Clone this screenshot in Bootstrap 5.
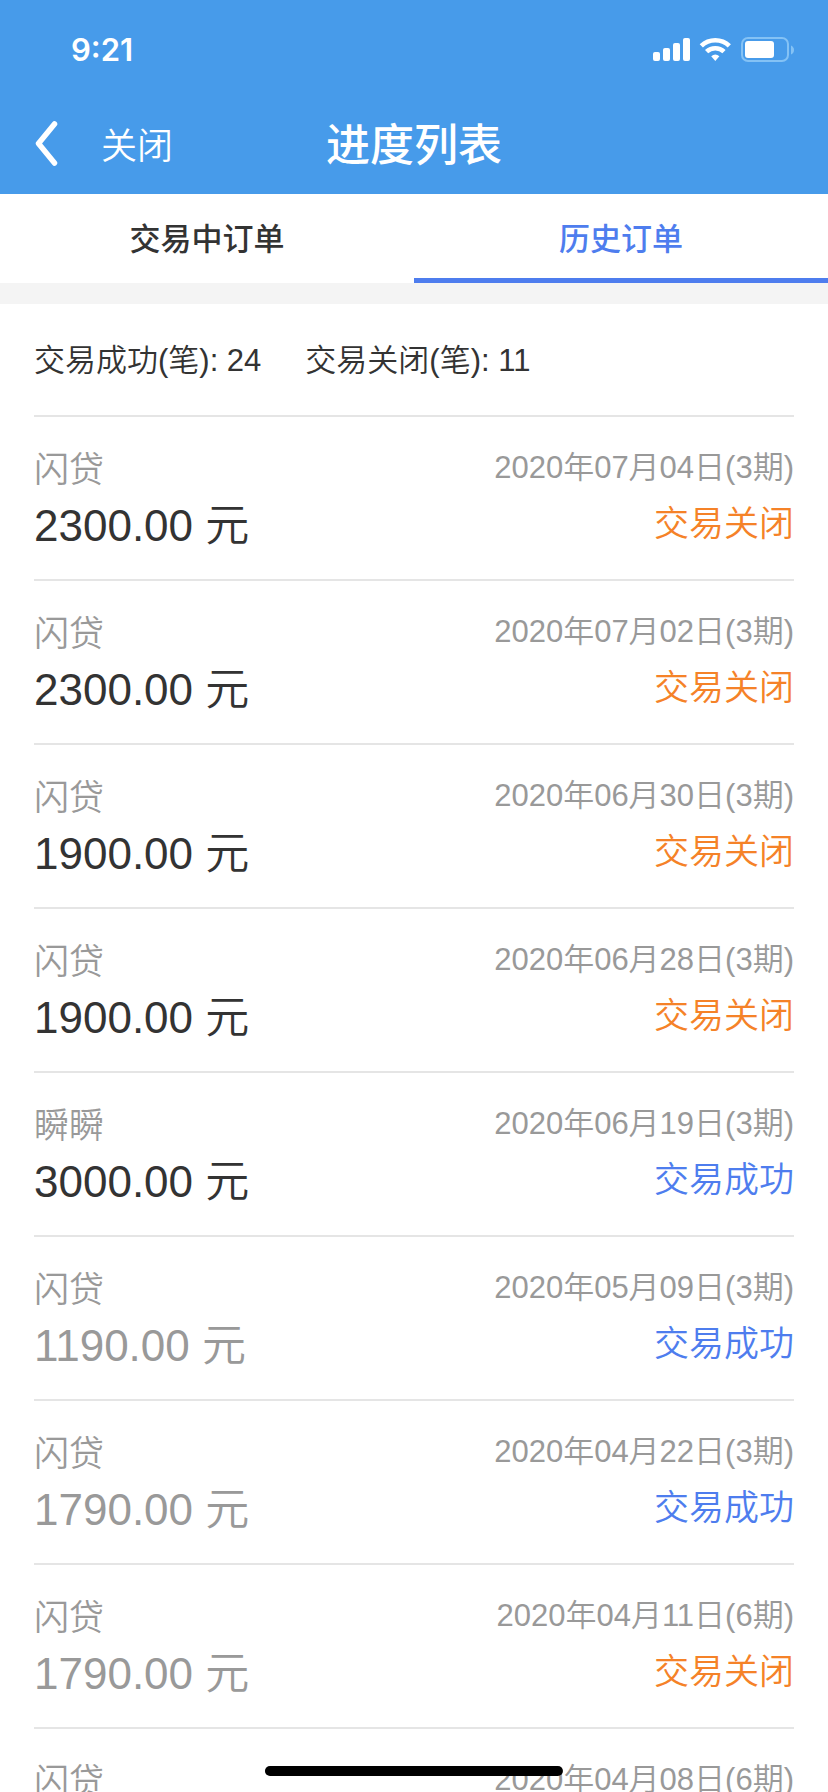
<!DOCTYPE html>
<html lang="zh-CN">
<head>
<meta charset="utf-8">
<meta name="viewport" content="width=device-width, initial-scale=1">
<title>进度列表</title>
<link href="https://cdn.jsdelivr.net/npm/bootstrap@5.3.0/dist/css/bootstrap.min.css" rel="stylesheet">
<style>
  body { font-family: "Liberation Sans", "Noto Sans CJK SC", sans-serif; color: #333; background: #fff; }
  .app-header { background: #479bea; color: #fff; }
  .status-bar { height: 92px; padding: 8px 33px 0 71px; }
  .clock { font: 600 31px/40px Inter, sans-serif; }
  .title-bar { height: 102px; }
  .title-bar h1 { font-size: 44px; line-height: 60px; font-weight: 500; padding-top: 6px; }
  .title-side { flex: 1 1 0; padding-left: 34px; }
  .back-btn { color: #fff; line-height: 1; }
  .close-btn { color: #fff; font-size: 36px; line-height: 44px; font-weight: 350; margin: 8px 0 0 43px; }
  .order-tabs { border-bottom: 21px solid #f4f4f4; }
  .order-tabs .nav-link { height: 89px; padding: 8px 0 0; font-size: 31px; line-height: 40px; font-weight: 500; color: #333; border-radius: 0; border-bottom: 5px solid transparent; }
  .order-tabs .nav-link.active { color: #4e7dee; border-bottom-color: #4e7dee; }
  .order-area { padding: 0 34px; overflow-y: auto; scrollbar-width: none; }
  .order-area::-webkit-scrollbar { display: none; }
  .totals { height: 113px; padding-top: 3px; gap: 44px; font-size: 31px; line-height: 44px; font-weight: 350; border-bottom: 2px solid #e5e5e5; }
  .order-row { height: 164px; padding: 29px 0 0; border-bottom: 2px solid #e5e5e5; font-weight: 350; }
  .order-name { font-size: 35px; line-height: 48px; color: #999; }
  .order-amount { font-size: 44px; line-height: 64px; }
  .order-date { font-size: 31px; line-height: 44px; color: #999; }
  .order-state { font-size: 35px; line-height: 68px; color: #f58228; }
  .order-state.done { color: #4e7dee; }
  .is-read { color: #999; }
  .home-bar { width: 36%; height: 10px; bottom: 16px; background: #000; }
</style>
</head>
<body>
<div class="vh-100 d-flex flex-column overflow-hidden">
  <header class="app-header flex-shrink-0">
    <div class="status-bar d-flex align-items-center justify-content-between">
      <span class="clock">9:21</span>
      <svg width="142" height="26" viewBox="0 0 142 26" fill="#fff" aria-hidden="true">
        <rect x="0" y="15" width="7" height="9" rx="2"/>
        <rect x="10" y="11" width="7" height="13" rx="2"/>
        <rect x="20" y="6" width="7" height="18" rx="2"/>
        <rect x="30" y="1" width="7" height="23" rx="2"/>
        <g fill="none" stroke="#fff" stroke-width="4.6">
          <path d="M48.300 8.900A20 20 0 0 1 76.300 8.900"/>
          <path d="M53.600 14.700A12.500 12.500 0 0 1 71 14.700"/>
        </g>
        <path d="M58.200 19.200Q62.300 16 66.400 19.200L62.300 24Z"/>
        <rect x="89" y="1" width="46" height="23" rx="6" fill="none" stroke="#84c2f5" stroke-width="2"/>
        <rect x="92" y="4" width="29" height="17" rx="3"/>
        <path d="M138 8.500q3 1.500 3 4.500t-3 4.500z" fill="#84c2f5"/>
      </svg>
    </div>
    <div class="title-bar d-flex align-items-center">
      <div class="title-side d-flex align-items-center">
        <button type="button" class="back-btn btn p-0 border-0" aria-label="返回">
          <svg width="24" height="48" viewBox="0 0 24 48" fill="none" stroke="#fff" stroke-width="5.500" stroke-linecap="round" stroke-linejoin="round"><path d="M20.500 5L4.500 24.500L20.500 44"/></svg>
        </button>
        <button type="button" class="close-btn btn p-0 border-0">关闭</button>
      </div>
      <h1 class="m-0">进度列表</h1>
      <div class="title-side"></div>
    </div>
  </header>

  <nav class="order-tabs nav nav-fill flex-nowrap flex-shrink-0">
    <a class="nav-link w-50 d-flex align-items-center justify-content-center" href="#">交易中订单</a>
    <a class="nav-link active w-50 d-flex align-items-center justify-content-center" aria-current="page" href="#">历史订单</a>
  </nav>

  <main class="order-area flex-grow-1">
    <div class="totals d-flex align-items-center">
      <span>交易成功(笔): 24</span>
      <span>交易关闭(笔): 11</span>
    </div>
    <ul class="list-unstyled m-0">
      <li class="order-row d-flex justify-content-between">
        <div><div class="order-name">闪贷</div><div class="order-amount">2300.00 元</div></div>
        <div class="text-end"><div class="order-date">2020年07月04日(3期)</div><div class="order-state">交易关闭</div></div>
      </li>
      <li class="order-row d-flex justify-content-between">
        <div><div class="order-name">闪贷</div><div class="order-amount">2300.00 元</div></div>
        <div class="text-end"><div class="order-date">2020年07月02日(3期)</div><div class="order-state">交易关闭</div></div>
      </li>
      <li class="order-row d-flex justify-content-between">
        <div><div class="order-name">闪贷</div><div class="order-amount">1900.00 元</div></div>
        <div class="text-end"><div class="order-date">2020年06月30日(3期)</div><div class="order-state">交易关闭</div></div>
      </li>
      <li class="order-row d-flex justify-content-between">
        <div><div class="order-name">闪贷</div><div class="order-amount">1900.00 元</div></div>
        <div class="text-end"><div class="order-date">2020年06月28日(3期)</div><div class="order-state">交易关闭</div></div>
      </li>
      <li class="order-row d-flex justify-content-between">
        <div><div class="order-name">瞬瞬</div><div class="order-amount">3000.00 元</div></div>
        <div class="text-end"><div class="order-date">2020年06月19日(3期)</div><div class="order-state done">交易成功</div></div>
      </li>
      <li class="order-row d-flex justify-content-between">
        <div><div class="order-name">闪贷</div><div class="order-amount is-read">1190.00 元</div></div>
        <div class="text-end"><div class="order-date">2020年05月09日(3期)</div><div class="order-state done">交易成功</div></div>
      </li>
      <li class="order-row d-flex justify-content-between">
        <div><div class="order-name">闪贷</div><div class="order-amount is-read">1790.00 元</div></div>
        <div class="text-end"><div class="order-date">2020年04月22日(3期)</div><div class="order-state done">交易成功</div></div>
      </li>
      <li class="order-row d-flex justify-content-between">
        <div><div class="order-name">闪贷</div><div class="order-amount is-read">1790.00 元</div></div>
        <div class="text-end"><div class="order-date">2020年04月11日(6期)</div><div class="order-state">交易关闭</div></div>
      </li>
      <li class="order-row d-flex justify-content-between">
        <div><div class="order-name">闪贷</div></div>
        <div class="text-end"><div class="order-date">2020年04月08日(6期)</div></div>
      </li>
    </ul>
  </main>
</div>
<div class="home-bar position-fixed start-50 translate-middle-x rounded-pill"></div>
<script src="https://cdn.jsdelivr.net/npm/bootstrap@5.3.0/dist/js/bootstrap.bundle.min.js"></script>
</body>
</html>
